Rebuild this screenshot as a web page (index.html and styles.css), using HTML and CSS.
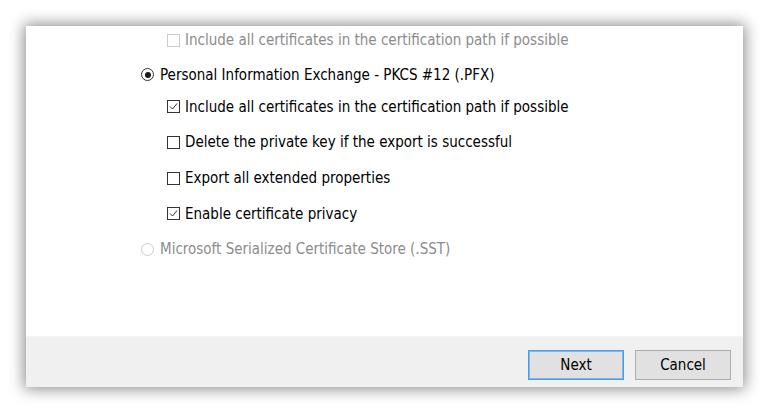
FILE: index.html
```html
<!DOCTYPE html>
<html>
<head>
<meta charset="utf-8">
<link rel="stylesheet" href="styles.css">
</head>
<body>
<div class="window">
  <div class="content">
    <div class="row sub disabled">
      <span class="box"></span><span>Include all certificates in the certification path if possible</span>
    </div>
    <div class="row top first">
      <span class="radio on"></span><span>Personal Information Exchange - PKCS #12 (.PFX)</span>
    </div>
    <div class="row sub">
      <span class="box checked"><svg viewBox="0 0 13 13" width="13" height="13"><path d="M3 6.5 L5.5 9 L10 3.5" fill="none" stroke="#333" stroke-width="1"/></svg></span><span>Include all certificates in the certification path if possible</span>
    </div>
    <div class="row sub">
      <span class="box"></span><span>Delete the private key if the export is successful</span>
    </div>
    <div class="row sub">
      <span class="box"></span><span>Export all extended properties</span>
    </div>
    <div class="row sub">
      <span class="box checked"><svg viewBox="0 0 13 13" width="13" height="13"><path d="M3 6.5 L5.5 9 L10 3.5" fill="none" stroke="#333" stroke-width="1"/></svg></span><span>Enable certificate privacy</span>
    </div>
    <div class="row top disabled">
      <span class="radio"></span><span>Microsoft Serialized Certificate Store (.SST)</span>
    </div>
  </div>
  <div class="footer">
    <button class="btn default">Next</button>
    <button class="btn">Cancel</button>
  </div>
</div>
</body>
</html>
```
FILE: styles.css
```css
html, body {
  margin: 0;
  padding: 0;
  background: #ffffff;
}
body {
  width: 768px;
  height: 412px;
  overflow: hidden;
  padding: 26px 0 0 26px;
  box-sizing: border-box;
  font-family: Tahoma, "DejaVu Sans Condensed", "Liberation Sans", sans-serif;
  font-size: 15px;
  color: #000;
}
.window {
  width: 717px;
  height: 361px;
  background: #fff;
  display: flex;
  flex-direction: column;
  box-shadow: 0 0 14px 2px rgba(0,0,0,0.45);
}
.content {
  height: 310px;
  padding: 4px 0 0 115px;
  box-sizing: border-box;
  display: flex;
  flex-direction: column;
}
.row {
  display: flex;
  align-items: center;
  height: 20px;
  margin-bottom: 15.7px;
  white-space: nowrap;
}
.row.first { margin-top: -1px; margin-bottom: 12px; }
.row.sub { padding-left: 26px; }
.box {
  width: 11px;
  height: 11px;
  border: 1px solid #333;
  background: #fff;
  margin-right: 5px;
  position: relative;
  flex: none;
}
.box svg { position: absolute; left: -1px; top: -1px; }
.radio {
  width: 11px;
  height: 11px;
  border: 1px solid #333;
  border-radius: 50%;
  margin-right: 6px;
  position: relative;
  flex: none;
}
.radio.on::after {
  content: "";
  position: absolute;
  left: 2.5px;
  top: 2.5px;
  width: 6px;
  height: 6px;
  border-radius: 50%;
  background: #1a1a1a;
}
.disabled { color: #8c8c8c; }
.disabled .box, .disabled .radio { border-color: #cccccc; }
.footer {
  flex: 1;
  background: #f0f0f0;
  border-top: 1px solid #f4f4f4;
  display: flex;
  justify-content: flex-end;
  align-items: flex-start;
  gap: 11px;
  padding: 13px 12px 0 0;
}
.btn {
  width: 96px;
  height: 30px;
  font-family: inherit;
  font-size: 15px;
  color: #000;
  background: #e1e1e1;
  border: 1px solid #adadad;
  padding: 0;
}
.btn.default { border: 1px solid #4a9de6; box-shadow: inset 0 0 0 1px #7cb8ee; }
```
